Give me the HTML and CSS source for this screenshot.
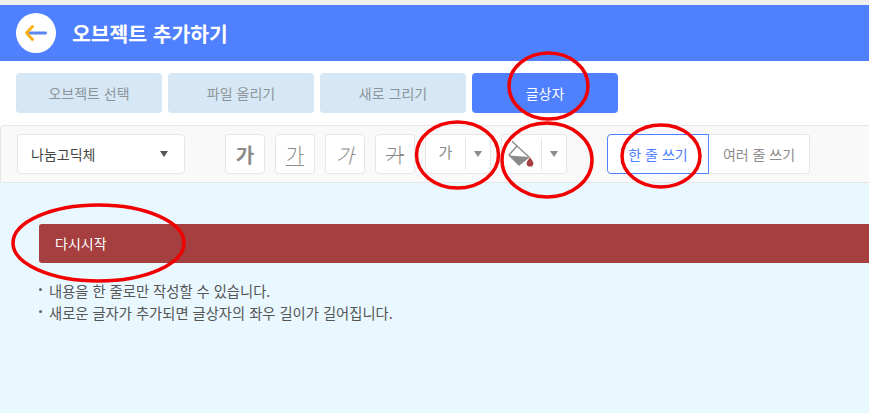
FILE: index.html
```html
<!DOCTYPE html>
<html lang="ko">
<head>
    <meta charset="UTF-8">
    <title>오브젝트 추가하기</title>
    <link rel="stylesheet" href="styles.css">
</head>
<body>
    <div class="top-strip"></div>
    <header class="header">
        <div class="back-btn">
            <svg width="28" height="20" viewBox="0 0 28 20">
                <path d="M7 10H23.5" stroke="#5b87f5" stroke-width="3" stroke-linecap="round" fill="none"/>
                <path d="M10.5 3.5L4.5 10L10.5 16.5" stroke="#fbb117" stroke-width="3" stroke-linecap="round" stroke-linejoin="round" fill="none"/>
            </svg>
        </div>
        <h1 class="title">오브젝트 추가하기</h1>
    </header>

    <nav class="tabs">
        <div class="tab">오브젝트 선택</div>
        <div class="tab">파일 올리기</div>
        <div class="tab">새로 그리기</div>
        <div class="tab active">글상자</div>
    </nav>

    <div class="toolbar">
        <div class="font-select">
            <span>나눔고딕체</span>
            <span class="caret dark"></span>
        </div>
        <div class="style-btns">
            <div class="tool-btn bold">가</div>
            <div class="tool-btn underline">가</div>
            <div class="tool-btn italic">가</div>
            <div class="tool-btn strike">가</div>
        </div>
        <div class="drop-btn">
            <span class="drop-main size-letter">가</span>
            <span class="drop-arrow"><span class="caret"></span></span>
        </div>
        <div class="drop-btn">
            <span class="drop-main">
                <svg width="34" height="30" viewBox="0 0 34 30">
                    <path d="M7 2L12 7" stroke="#8a8a8a" stroke-width="1.3" fill="none"/>
                    <path d="M4 16L12 7L24 18L14 26Z" fill="none" stroke="#8a8a8a" stroke-width="1.3" stroke-linejoin="round"/>
                    <path d="M4 16.5L24 18L14 26.5Z" fill="#8a8a8a"/>
                    <path d="M25 18C24 20.8 21.6 22 21.6 24.2A3.4 3.4 0 0 0 28.4 24.2C28.4 22 26 20.8 25 18Z" fill="#a63f3f"/>
                </svg>
            </span>
            <span class="drop-arrow"><span class="caret"></span></span>
        </div>
        <div class="line-btns">
            <div class="line-btn selected">한 줄 쓰기</div>
            <div class="line-btn">여러 줄 쓰기</div>
        </div>
    </div>

    <main class="content">
        <div class="restart-bar">다시시작</div>
        <ul class="notes">
            <li>내용을 한 줄로만 작성할 수 있습니다.</li>
            <li>새로운 글자가 추가되면 글상자의 좌우 길이가 길어집니다.</li>
        </ul>
    </main>

    <!-- red marks drawn over the screenshot -->
    <svg class="marks" width="869" height="413" viewBox="0 0 869 413">
        <ellipse cx="548.5" cy="86" rx="39.5" ry="33"/>
        <ellipse cx="457.5" cy="155" rx="41" ry="33"/>
        <ellipse cx="547" cy="160" rx="45" ry="37"/>
        <ellipse cx="661" cy="156" rx="39" ry="31"/>
        <ellipse cx="98.5" cy="243" rx="85.5" ry="38"/>
    </svg>
</body>
</html>
```

FILE: styles.css
```css
* {
    box-sizing: border-box;
}
body {
    margin: 0;
    height: 413px;
    overflow: hidden;
    background: #fff;
    font-family: "Noto Sans CJK KR", "Noto Sans", sans-serif;
    font-size: 13px;
    color: #8b8b8b;
}
.top-strip {
    height: 5px;
    background: #efefef;
}
.header {
    height: 56px;
    background: #4f80ff;
    display: flex;
    align-items: center;
    padding-left: 16px;
}
.back-btn {
    width: 40px;
    height: 40px;
    border-radius: 50%;
    background: #fff;
    display: flex;
    align-items: center;
    justify-content: center;
}
.title {
    margin: 0 0 0 16px;
    font-size: 20.4px;
    font-weight: 700;
    color: #fff;
}
.tabs {
    display: flex;
    gap: 6px;
    padding: 12px 16px;
}
.tab {
    width: 146px;
    height: 40px;
    padding-bottom: 1px;
    border-radius: 4px;
    background: #d6e8f5;
    display: flex;
    align-items: center;
    justify-content: center;
    font-size: 14px;
    color: #8d9499;
}
.tab.active {
    background: #4f80ff;
    color: #fff;
}
.toolbar {
    height: 58px;
    display: flex;
    align-items: center;
    background: #f9f9f9;
    border: 1px solid #e6e6e6;
    border-right: 0;
    border-top-left-radius: 4px;
    padding-left: 16px;
}
.font-select {
    width: 168px;
    height: 40px;
    padding: 0 16px 0 13px;
    display: flex;
    align-items: center;
    justify-content: space-between;
    background: #fff;
    border: 1px solid #e6e6e6;
    border-radius: 4px;
    font-size: 14px;
    color: #444;
}
.caret {
    display: block;
    width: 0;
    height: 0;
    border-left: 4px solid transparent;
    border-right: 4px solid transparent;
    border-top: 6px solid #8a8a8a;
}
.caret.dark {
    border-top-color: #555;
}
.style-btns {
    display: flex;
    gap: 10px;
    margin-left: 40px;
}
.tool-btn {
    width: 40px;
    height: 40px;
    display: flex;
    align-items: center;
    justify-content: center;
    background: #fff;
    border: 1px solid #e6e6e6;
    border-radius: 4px;
    font-size: 20px;
    font-weight: 300;
    color: #8b8b8b;
    text-decoration-skip-ink: none;
}
.tool-btn.bold {
    font-weight: 700;
}
.underline {
    text-decoration: underline 1px;
    text-underline-offset: 2px;
}
.italic {
    font-style: italic;
}
.strike {
    text-decoration: line-through 1px;
}
.drop-btn {
    width: 66px;
    height: 40px;
    margin-left: 10px;
    display: flex;
    background: #fff;
    border: 1px solid #e6e6e6;
    border-radius: 4px;
}
.drop-main {
    width: 39px;
    display: flex;
    align-items: center;
    justify-content: center;
}
.size-letter {
    font-size: 15px;
    padding-bottom: 6px;
}
.drop-arrow {
    flex: 1;
    margin: 3px 0;
    display: flex;
    align-items: center;
    justify-content: center;
    border-left: 1px solid #e6e6e6;
}
.line-btns {
    display: flex;
    margin-left: 40px;
}
.line-btn {
    width: 101px;
    height: 40px;
    display: flex;
    align-items: center;
    justify-content: center;
    background: #fff;
    border: 1px solid #e6e6e6;
    border-left: 0;
    border-radius: 0 4px 4px 0;
    font-size: 14px;
    color: #8b8b8b;
}
.line-btn.selected {
    width: 102px;
    border: 1px solid #4f80ff;
    border-radius: 4px 0 0 4px;
    color: #4f80ff;
}
.content {
    height: 230px;
    background: #e9f7ff;
    padding: 41px 0 0 39px;
}
.restart-bar {
    height: 39px;
    margin-right: -8px;
    padding: 0 0 1px 16px;
    display: flex;
    align-items: center;
    background: #a63f3f;
    border-radius: 3px 0 0 3px;
    font-size: 14px;
    color: #fff;
}
.notes {
    list-style: none;
    margin: 17px 0 0;
    padding: 0;
    color: #555;
}
.notes li {
    position: relative;
    height: 22px;
    line-height: 22px;
    padding-left: 10px;
    font-size: 14.3px;
}
.notes li::before {
    content: "";
    position: absolute;
    left: 0;
    top: 8px;
    width: 3px;
    height: 3px;
    border-radius: 50%;
    background: #666;
}
.marks {
    position: absolute;
    left: 0;
    top: 0;
    pointer-events: none;
}
.marks ellipse {
    fill: none;
    stroke: #f00000;
    stroke-width: 3.5;
}
```
